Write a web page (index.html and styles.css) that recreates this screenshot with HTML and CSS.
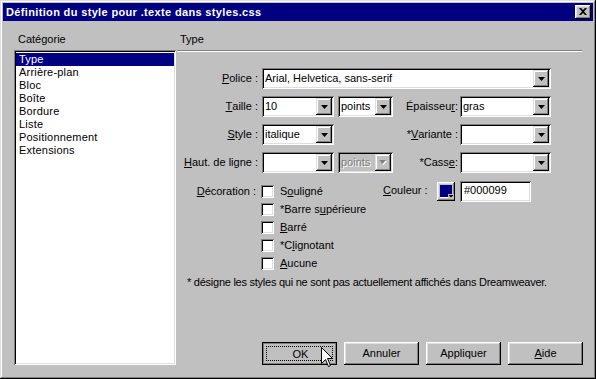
FILE: index.html
```html
<!DOCTYPE html>
<html lang="fr">
<head>
<meta charset="utf-8">
<title>Définition du style</title>
<link rel="stylesheet" href="styles.css">
</head>
<body>
<div class="window">
  <div class="titlebar">
    <span class="title">Définition du style pour .texte dans styles.css</span>
    <div class="close"><svg width="8" height="7" viewBox="0 0 8 7"><path d="M0 0h2l2 2 2-2h2L5 3.5 8 7H6L4 5 2 7H0l3-3.5z" fill="#000"/></svg></div>
  </div>
  <div class="content">
    <div class="left">
      <div class="caption">Catégorie</div>
      <ul class="listbox">
        <li class="sel">Type</li>
        <li>Arrière-plan</li>
        <li>Bloc</li>
        <li>Boîte</li>
        <li>Bordure</li>
        <li>Liste</li>
        <li>Positionnement</li>
        <li>Extensions</li>
      </ul>
    </div>
    <div class="right">
      <div class="head">Type</div>
      <div class="form">
        <label class="lbl"><u>P</u>olice :</label>
        <div class="combo span-all"><span class="val">Arial, Helvetica, sans-serif</span><span class="drop"><svg width="7" height="4" viewBox="0 0 7 4"><path d="M0 0h7L3.5 4z" fill="#000"/></svg></span></div>

        <label class="lbl"><u>T</u>aille :</label>
        <div class="combo c2"><span class="val">10</span><span class="drop"><svg width="7" height="4" viewBox="0 0 7 4"><path d="M0 0h7L3.5 4z" fill="#000"/></svg></span></div>
        <div class="combo c4"><span class="val">points</span><span class="drop"><svg width="7" height="4" viewBox="0 0 7 4"><path d="M0 0h7L3.5 4z" fill="#000"/></svg></span></div>
        <label class="lbl lbl2">Épaisseu<u>r</u> :</label>
        <div class="combo c6"><span class="val">gras</span><span class="drop"><svg width="7" height="4" viewBox="0 0 7 4"><path d="M0 0h7L3.5 4z" fill="#000"/></svg></span></div>

        <label class="lbl"><u>S</u>tyle :</label>
        <div class="combo c2"><span class="val">italique</span><span class="drop"><svg width="7" height="4" viewBox="0 0 7 4"><path d="M0 0h7L3.5 4z" fill="#000"/></svg></span></div>
        <label class="lbl lbl2">*<u>V</u>ariante :</label>
        <div class="combo c6"><span class="val"></span><span class="drop"><svg width="7" height="4" viewBox="0 0 7 4"><path d="M0 0h7L3.5 4z" fill="#000"/></svg></span></div>

        <label class="lbl"><u>H</u>aut. de ligne :</label>
        <div class="combo c2"><span class="val"></span><span class="drop"><svg width="7" height="4" viewBox="0 0 7 4"><path d="M0 0h7L3.5 4z" fill="#000"/></svg></span></div>
        <div class="combo c4 disabled"><span class="val">points</span><span class="drop"><svg width="8" height="5" viewBox="0 0 8 5"><path d="M1 1h7L4.5 5z" fill="#fff"/><path d="M0 0h7L3.5 4z" fill="#808080"/></svg></span></div>
        <label class="lbl lbl2">*Cass<u>e</u> :</label>
        <div class="combo c6"><span class="val"></span><span class="drop"><svg width="7" height="4" viewBox="0 0 7 4"><path d="M0 0h7L3.5 4z" fill="#000"/></svg></span></div>
      </div>

      <div class="deco">
        <div class="deco-label"><u>D</u>écoration :</div>
        <div class="checks">
          <div class="check"><span class="box"></span><span>S<u>o</u>uligné</span></div>
          <div class="check"><span class="box"></span><span>*Barre s<u>u</u>périeure</span></div>
          <div class="check"><span class="box"></span><span><u>B</u>arré</span></div>
          <div class="check"><span class="box"></span><span>*C<u>l</u>ignotant</span></div>
          <div class="check"><span class="box"></span><span><u>A</u>ucune</span></div>
        </div>
        <div class="color">
          <span class="color-label"><u>C</u>ouleur :</span>
          <span class="swatch"><svg width="14" height="14" viewBox="0 0 14 14"><rect x="0" y="0" width="12" height="12" fill="#000080"/><rect x="8" y="9" width="6" height="5" fill="#c0c0c0"/><path d="M8.5 10h5L11 12.5z" fill="#000"/><rect x="0" y="12" width="8" height="1" fill="#fff"/></svg></span>
          <span class="textfield">#000099</span>
        </div>
      </div>

      <p class="note">* désigne les styles qui ne sont pas actuellement affichés dans Dreamweaver.</p>

      <div class="buttons">
        <button class="btn default"><span class="focus">OK</span>
          <svg class="cursor" width="13" height="20" viewBox="0 0 13 20"><path d="M0.5 0.5V16.5L4.5 12.5L7.5 19.5L9.5 18.5L6.5 11.5H11.5Z" fill="#fff" stroke="#000" stroke-width="1" stroke-linejoin="miter"/></svg>
        </button>
        <button class="btn">Annuler</button>
        <button class="btn">Appliquer</button>
        <button class="btn"><u>A</u>ide</button>
      </div>
    </div>
  </div>
</div>
</body>
</html>
```

FILE: styles.css
```css
* {
  box-sizing: border-box;
  margin: 0;
  padding: 0;
}

html,
body {
  width: 596px;
  height: 379px;
  overflow: hidden;
}

body {
  font-family: "Liberation Sans", Arial, sans-serif;
  font-size: 11px;
  line-height: 13px;
  color: #000;
  background: #c0c0c0;
}

u {
  text-decoration: underline;
  text-underline-offset: 1px;
}

.window {
  width: 596px;
  height: 379px;
  padding: 3px;
  display: flex;
  flex-direction: column;
  background: #c0c0c0;
  box-shadow: inset -1px -1px #000, inset 1px 1px #dfdfdf, inset -2px -2px #808080, inset 2px 2px #fff;
}

.titlebar {
  flex: none;
  height: 18px;
  background: #000080;
  color: #fff;
  display: flex;
  align-items: center;
  justify-content: space-between;
  padding: 0 2px 0 3px;
}

.title {
  font-weight: bold;
  font-size: 11px;
  letter-spacing: 0.35px;
}

.close {
  width: 16px;
  height: 14px;
  background: #c0c0c0;
  display: flex;
  align-items: center;
  justify-content: center;
  padding: 0 1px 1px 0;
  box-shadow: inset -1px -1px #000, inset 1px 1px #fff, inset -2px -2px #808080, inset 2px 2px #dfdfdf;
}

.close svg {
  display: block;
}

.content {
  flex: 1;
  display: flex;
  padding: 12px 10px 11px 11px;
}

.left {
  width: 162px;
  display: flex;
  flex-direction: column;
}

.caption {
  height: 13px;
  padding-left: 4px;
  margin-bottom: 4px;
}

.listbox {
  flex: 1;
  list-style: none;
  background: #fff;
  padding: 3px 2px 2px 2px;
  box-shadow: inset 1px 1px #808080, inset -1px -1px #fff, inset 2px 2px #000, inset -2px -2px #dfdfdf;
}

.listbox li {
  height: 13px;
  padding-left: 3px;
  letter-spacing: 0.2px;
}

.listbox li.sel {
  background: #000080;
  color: #fff;
}

.right {
  flex: 1;
  margin-left: 1px;
  display: flex;
  flex-direction: column;
}

.head {
  padding: 0 0 4px 3px;
  border-bottom: 1px solid #808080;
  box-shadow: 0 1px #fff;
  margin-right: 1px;
}

.form {
  margin-top: 17px;
  display: grid;
  grid-template-columns: 85px 72px 4px 55px 67px 91px;
  grid-auto-rows: 21px;
  row-gap: 7px;
}

.lbl {
  grid-column: 1;
  display: flex;
  align-items: center;
  justify-content: flex-end;
  padding-right: 4px;
  white-space: nowrap;
}

.lbl2 {
  grid-column: 5;
  padding-right: 2px;
}

.combo {
  display: flex;
  align-items: stretch;
  background: #fff;
  padding: 2px;
  box-shadow: inset 1px 1px #808080, inset -1px -1px #fff, inset 2px 2px #000, inset -2px -2px #dfdfdf;
}

.span-all {
  grid-column: 2 / 7;
}

.c2 {
  grid-column: 2;
}

.c4 {
  grid-column: 4;
}

.c6 {
  grid-column: 6;
}

.val {
  flex: 1;
  padding-left: 1px;
  display: flex;
  align-items: center;
  white-space: nowrap;
  overflow: hidden;
}

.drop {
  width: 16px;
  flex: none;
  display: flex;
  align-items: center;
  justify-content: center;
  background: #c0c0c0;
  box-shadow: inset -1px -1px #000, inset 1px 1px #dfdfdf, inset -2px -2px #808080, inset 2px 2px #fff;
}

.drop svg {
  display: block;
}

.disabled {
  background: #c0c0c0;
}

.disabled .val {
  color: #808080;
  text-shadow: 1px 1px #fff;
}

.deco {
  display: flex;
  margin-top: 9px;
}

.deco-label {
  width: 84px;
  height: 18px;
  line-height: 18px;
  text-align: right;
  padding-right: 5px;
}

.checks {
  width: 122px;
  display: flex;
  flex-direction: column;
}

.check {
  height: 18px;
  display: flex;
  align-items: center;
  gap: 6px;
  white-space: nowrap;
}

.box {
  width: 13px;
  height: 13px;
  flex: none;
  background: #fff;
  box-shadow: inset 1px 1px #808080, inset -1px -1px #fff, inset 2px 2px #000, inset -2px -2px #dfdfdf;
}

.color {
  display: flex;
  align-items: flex-start;
  margin-top: -1px;
}

.color-label {
  width: 54px;
  height: 21px;
  line-height: 19px;
}

.swatch {
  width: 18px;
  height: 19px;
  margin-top: 1px;
  margin-right: 5px;
  padding: 3px 0 0 3px;
  background: #c0c0c0;
  box-shadow: inset -1px -1px #000, inset 1px 1px #fff, inset -2px -2px #808080, inset 2px 2px #dfdfdf;
}

.swatch svg {
  display: block;
}

.textfield {
  width: 71px;
  height: 21px;
  background: #fff;
  padding: 3px 0 0 4px;
  box-shadow: inset 1px 1px #808080, inset -1px -1px #fff, inset 2px 2px #000, inset -2px -2px #dfdfdf;
}

.note {
  margin-top: 4px;
  padding-left: 10px;
  white-space: nowrap;
  letter-spacing: -0.25px;
}

.buttons {
  margin-top: auto;
  display: flex;
  justify-content: flex-end;
  gap: 7px;
}

.btn {
  position: relative;
  width: 75px;
  height: 23px;
  font: inherit;
  color: #000;
  background: #c0c0c0;
  border: none;
  display: flex;
  align-items: center;
  justify-content: center;
  box-shadow: inset -1px -1px #000, inset 1px 1px #fff, inset -2px -2px #808080, inset 2px 2px #dfdfdf;
}

.btn.default {
  border: 1px solid #000;
  box-shadow: inset 1px 1px #808080, inset -1px -1px #808080;
  padding: 1px 0 0 2px;
}

.focus {
  position: absolute;
  left: 3px;
  top: 3px;
  right: 3px;
  bottom: 3px;
  border: 1px dotted #000;
  display: flex;
  align-items: center;
  justify-content: center;
  padding: 1px 0 0 2px;
}

.cursor {
  position: absolute;
  left: 58px;
  top: 4px;
  display: block;
}
```
